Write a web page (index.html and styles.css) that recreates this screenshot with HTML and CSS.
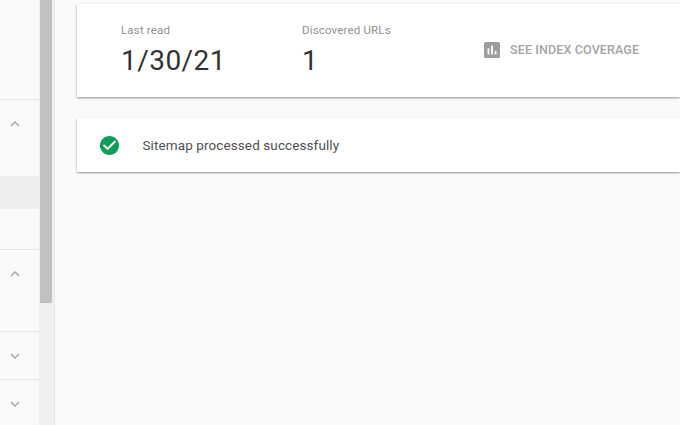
FILE: index.html
```html
<!DOCTYPE html>
<html lang="en">
<head>
    <meta charset="UTF-8">
    <meta name="viewport" content="width=device-width, initial-scale=1.0">
    <title>Sitemap details</title>
    <link rel="stylesheet" href="styles.css">
</head>
<body>
    <div class="navigation">
        <div class="nav-group nav-top"></div>
        <div class="nav-group nav-index">
            <svg class="chevron" viewBox="0 0 10 6"><path d="M1 5l4-4 4 4"/></svg>
            <div class="nav-selected"></div>
        </div>
        <div class="nav-group nav-enhancements">
            <svg class="chevron" viewBox="0 0 10 6"><path d="M1 5l4-4 4 4"/></svg>
        </div>
        <div class="nav-group nav-closed">
            <svg class="chevron" viewBox="0 0 10 6"><path d="M1 1l4 4 4-4"/></svg>
        </div>
        <div class="nav-group nav-last">
            <svg class="chevron" viewBox="0 0 10 6"><path d="M1 1l4 4 4-4"/></svg>
        </div>
    </div>
    <div class="scrollbar">
        <div class="scrollbar-thumb"></div>
    </div>
    <main class="content">
        <section class="card summary">
            <div class="stat stat-read">
                <div class="label">Last read</div>
                <div class="value">1/30/21</div>
            </div>
            <div class="stat stat-urls">
                <div class="label">Discovered URLs</div>
                <div class="value">1</div>
            </div>
            <div class="coverage">
                <svg class="coverage-icon" viewBox="3 3 18 18"><path d="M19 3H5c-1.1 0-2 .9-2 2v14c0 1.1.9 2 2 2h14c1.1 0 2-.9 2-2V5c0-1.1-.9-2-2-2zM9 17H7v-7h2v7zm4 0h-2V7h2v10zm4 0h-2v-4h2v4z"/></svg>
                <span>SEE INDEX COVERAGE</span>
            </div>
        </section>
        <section class="card status">
            <svg class="status-icon" viewBox="2 2 20 20"><path d="M12 2C6.48 2 2 6.48 2 12s4.48 10 10 10 10-4.48 10-10S17.52 2 12 2zm-2 15l-5-5 1.41-1.41L10 14.17l7.59-7.59L19 8l-9 9z"/></svg>
            <span class="status-text">Sitemap processed successfully</span>
        </section>
    </main>
</body>
</html>
```
FILE: styles.css
```css
* {
  box-sizing: border-box;
}

body {
  margin: 0;
  height: 425px;
  display: flex;
  overflow: hidden;
  background-color: #fafafa;
  font-family: Roboto, Arial, sans-serif;
}

.navigation {
  width: 39px;
  flex-shrink: 0;
}

.nav-group {
  border-bottom: 1px solid #e6e6e6;
  padding-top: 21px;
}

.nav-top {
  height: 100px;
}

.nav-index {
  height: 150px;
}

.nav-enhancements {
  height: 82px;
}

.nav-closed {
  height: 48px;
}

.nav-last {
  border-bottom: none;
}

.chevron {
  display: block;
  width: 10px;
  height: 6px;
  margin-left: 10px;
  fill: none;
  stroke: #a8a8a8;
  stroke-width: 1.5;
}

.nav-selected {
  height: 33px;
  margin-top: 49px;
  background-color: #eeeeee;
}

.scrollbar {
  width: 16px;
  flex-shrink: 0;
  padding-left: 1px;
  background-color: #f0f0f0;
  border-right: 1px solid #e6e6e6;
}

.scrollbar-thumb {
  width: 12px;
  height: 303px;
  background-color: #c1c1c1;
}

.content {
  flex: 1;
  padding: 4px 0 0 22px;
}

.card {
  display: flex;
  background-color: white;
  box-shadow: 0 1px 2px rgba(0, 0, 0, 0.42);
}

.summary {
  height: 93px;
  padding-left: 44px;
}

.stat-read {
  width: 181px;
}

.stat-urls {
  width: 182px;
}

.label {
  margin-top: 19px;
  font-size: 11.5px;
  line-height: 15px;
  letter-spacing: 0.17px;
  color: #929292;
}

.value {
  margin-top: 6px;
  font-size: 28px;
  line-height: 34px;
  letter-spacing: 0.45px;
  color: #333333;
}

.coverage {
  height: 92px;
  display: flex;
  align-items: center;
  font-size: 12.5px;
  line-height: 14px;
  font-weight: 500;
  letter-spacing: 0.13px;
  color: #a4a4a4;
}

.coverage-icon {
  width: 16px;
  height: 16px;
  margin-right: 10px;
  fill: #9c9c9c;
}

.status {
  height: 54px;
  margin-top: 21px;
  padding-left: 23px;
  align-items: center;
}

.status-icon {
  width: 19px;
  height: 19px;
  fill: #109d58;
}

.status-text {
  margin-left: 23.5px;
  font-size: 13.5px;
  line-height: 16px;
  letter-spacing: 0.1px;
  color: #505050;
}
```
